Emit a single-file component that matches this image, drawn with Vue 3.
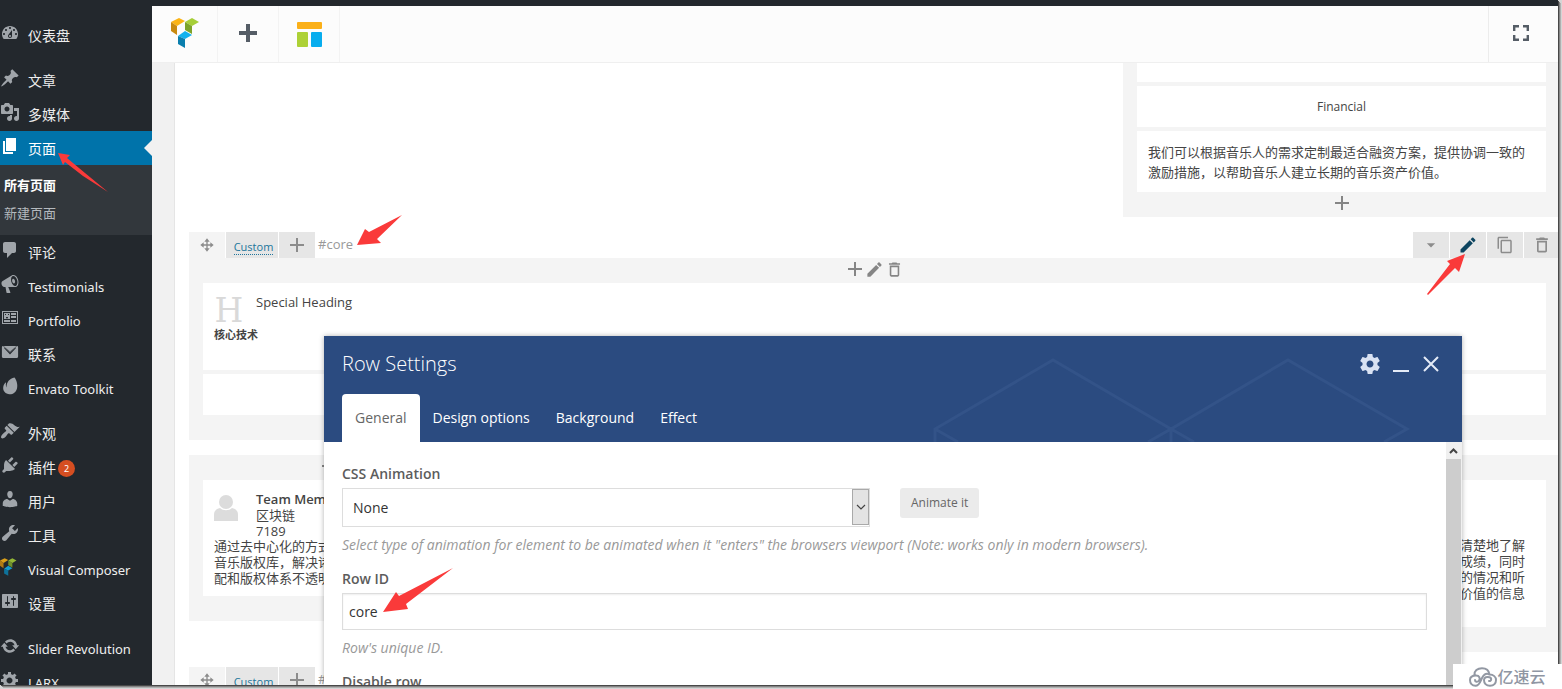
<script setup>
import { ref } from 'vue'

const icons = {
  dashboard: 'M3.76 16h12.48c1.1-1.37 1.76-3.11 1.76-5 0-4.42-3.58-8-8-8s-8 3.58-8 8c0 1.89.66 3.63 1.76 5zM10 4c.55 0 1 .45 1 1s-.45 1-1 1-1-.45-1-1 .45-1 1-1zM6 6c.55 0 1 .45 1 1s-.45 1-1 1-1-.45-1-1 .45-1 1-1zm8 0c.55 0 1 .45 1 1s-.45 1-1 1-1-.45-1-1 .45-1 1-1zm-5.37 5.55L12 7v6c0 1.1-.9 2-2 2s-2-.9-2-2c0-.57.24-1.08.63-1.45zM4 10c.55 0 1 .45 1 1s-.45 1-1 1-1-.45-1-1 .45-1 1-1zm12 0c.55 0 1 .45 1 1s-.45 1-1 1-1-.45-1-1 .45-1 1-1zm-5 3c0-.55-.45-1-1-1s-1 .45-1 1 .45 1 1 1 1-.45 1-1z',
  pin: 'M10.44 3.02l1.82-1.82 6.36 6.35-1.83 1.82c-1.05-.68-2.48-.57-3.41.36l-.75.75c-.92.93-1.04 2.35-.35 3.41l-1.83 1.82-2.41-2.41-2.8 2.79c-.42.42-3.38 2.71-3.8 2.29s1.86-3.39 2.28-3.81l2.79-2.79L4.1 9.36l1.83-1.82c1.05.69 2.48.57 3.4-.36l.75-.75c.93-.92 1.05-2.35.36-3.41z',
  media: 'M13 11V4c0-.55-.45-1-1-1h-1.67L9 1H5L3.67 3H2c-.55 0-1 .45-1 1v7c0 .55.45 1 1 1h10c.55 0 1-.45 1-1zM7 4.5c1.38 0 2.5 1.12 2.5 2.5S8.38 9.5 7 9.5 4.5 8.38 4.5 7 5.62 4.5 7 4.5zM14 6h5v10.5c0 1.38-1.12 2.5-2.5 2.5S14 17.88 14 16.5s1.12-2.5 2.5-2.5c.17 0 .34.02.5.05V9h-3V6zm-4 8.05V13h2v3.5c0 1.38-1.12 2.5-2.5 2.5S7 17.88 7 16.5 8.12 14 9.5 14c.17 0 .34.02.5.05z',
  page: 'M6 15V2h10v13H6zm-1 1h8v2H3V5h2v11z',
  comments: 'M5 2h9c1.1 0 2 .9 2 2v7c0 1.1-.9 2-2 2h-2l-5 5v-5H5c-1.1 0-2-.9-2-2V4c0-1.1.9-2 2-2z',
  megaphone: 'M18.15 5.94c.46 1.62.38 3.22-.02 4.48-.42 1.28-1.26 2.18-2.3 2.48-.16.06-.26.06-.4.06-.06.02-.12.02-.18.02-.06.02-.14.02-.22.02h-6.8l2.22 5.5c.02.14-.06.26-.14.34-.08.1-.24.16-.34.16H6.95c-.1 0-.26-.06-.34-.16-.08-.08-.16-.2-.14-.34l-1-5.5H4.25l-.02-.02c-.5.06-1.08-.18-1.54-.62s-.88-1.08-1.06-1.88c-.24-.8-.2-1.56-.02-2.2.18-.62.58-1.08 1.06-1.3l.02-.02 9-5.4c.1-.06.18-.1.24-.16.06-.04.14-.08.24-.12.16-.08.28-.12.5-.18 1.04-.3 2.24.1 3.22.98s1.84 2.24 2.26 3.86zm-2.58 5.98h-.02c.4-.1.74-.34 1.04-.7.58-.7.86-1.76.86-3.04 0-.64-.1-1.3-.28-1.98-.34-1.36-1.02-2.5-1.78-3.24s-1.68-1.1-2.46-.88c-.82.22-1.4.96-1.7 2-.32 1.04-.28 2.36.06 3.72.38 1.36 1 2.5 1.8 3.24.78.74 1.62 1.1 2.48.88zm-2.54-7.08c.22-.04.42-.02.62.04.38.16.76.48 1.02 1s.42 1.2.42 1.78c0 .3-.04.56-.12.8-.18.48-.44.84-.86.94-.34.1-.8-.06-1.14-.4s-.64-.86-.78-1.5c-.18-.62-.12-1.24.02-1.72s.48-.84.82-.94z',
  portfolio: 'M2 3h16v13H2zM3 4v11h14V4zM4 5h6v6H4zM5 6h1v1H5zM8 6h1v1H8zM6 9c0 2 2 2 2 0zM4 12h6v2H4zM11 5h5v2h-5zM11 8h5v2h-5zM11 12h5v2h-5z',
  email: 'M3.5 4h13l-6.5 5.6zM1.9 5.2C2 4.500 2.400 4 3 4L10 10.600 17 4c.6 0 1.100.5 1.100 1.200V14.500c0 .8-.6 1.500-1.400 1.500H3.400C2.500 16 1.900 15.300 1.900 14.500zM4 6l6 6.500L16 6l-1-.5-5 4.600-5-4.600z',
  envato: 'M14.500 1.500C16.500 4 18 8.500 17 12.500 16 16.500 12.800 18.500 9.500 18.300 5.500 18 2.800 15 3.200 11.500 3.400 9.500 4.200 8 5.300 6.800c.5-.4.800-.2.700.300-.3 1.600-.2 3 .5 4.300C6.500 6 9.500 2.500 14.500 1.500z',
  appearance: 'M14.48 11.06L7.41 3.99l1.5-1.5c.5-.56 2.3-.47 3.51.32 1.21.8 1.43 1.28 2.91 2.1 1.18.64 2.45 1.26 4.45.85zm-.71.71L6.7 4.7 4.93 6.47c-.39.39-.39 1.02 0 1.41l1.06 1.06c.39.39.39 1.03 0 1.42-.6.6-1.43 1.11-2.21 1.69-.35.26-.7.53-1.01.84C1.43 14.23.4 16.08 1.4 17.07c.99 1 2.84-.03 4.18-1.36.31-.31.58-.66.85-1.02.57-.78 1.08-1.61 1.69-2.21.39-.39 1.02-.39 1.41 0l1.06 1.06c.39.39 1.02.39 1.41 0z',
  plugins: 'M13.11 4.36L9.87 7.6 8 5.73l3.24-3.24c.35-.34 1.05-.2 1.56.32.52.51.66 1.21.31 1.55zm-8 1.77l.91-1.12 9.01 9.01-1.19.84c-.71.71-2.63 1.16-3.82 1.16H6.14L4.9 17.26c-.59.59-1.54.59-2.12 0-.59-.58-.59-1.53 0-2.12l1.24-1.24v-3.88c0-1.13.4-3.19 1.09-3.89zm7.26 3.97l3.24-3.24c.34-.35 1.04-.21 1.55.31.52.51.66 1.21.31 1.55l-3.24 3.25z',
  users: 'M10 9.25c-2.27 0-2.73-3.44-2.73-3.44C7 4.02 7.82 2 9.97 2c2.16 0 2.98 2.02 2.71 3.81 0 0-.41 3.44-2.68 3.44zm0 2.57L12.72 10c2.39 0 4.52 2.33 4.52 4.53v2.49s-3.65 1.13-7.24 1.13c-3.65 0-7.24-1.13-7.24-1.13v-2.49c0-2.25 1.94-4.48 4.47-4.48z',
  tools: 'M16.68 9.77c-1.34 1.34-3.3 1.67-4.95.99l-5.41 6.52c-.99.99-2.59.99-3.58 0s-.99-2.59 0-3.57l6.52-5.42c-.68-1.65-.35-3.61.99-4.95 1.28-1.28 3.12-1.62 4.72-1.06l-2.89 2.89 2.82 2.82 2.86-2.87c.53 1.58.18 3.39-1.08 4.65z',
  settings: 'M18 16V4c0-.55-.45-1-1-1H3c-.55 0-1 .45-1 1v12c0 .55.45 1 1 1h14c.55 0 1-.45 1-1zM8 11h1c.55 0 1 .45 1 1s-.45 1-1 1H8v1.5c0 .28-.22.5-.5.5s-.5-.22-.5-.5V13H6c-.55 0-1-.45-1-1s.45-1 1-1h1V5.5c0-.28.22-.5.5-.5s.5.22.5.5V11zm5-2h-1c-.55 0-1-.45-1-1s.45-1 1-1h1V5.5c0-.28.22-.5.5-.5s.5.22.5.5V7h1c.55 0 1 .45 1 1s-.45 1-1 1h-1v5.500c0 .28-.22.5-.5.5s-.5-.22-.5-.5V9z',
  update: 'M10.2 3.28c3.53 0 6.43 2.61 6.92 6h2.08l-3.5 4-3.5-4h2.32c-.45-1.97-2.21-3.45-4.32-3.45-1.45 0-2.73.71-3.54 1.78L4.95 5.66C6.23 4.2 8.11 3.28 10.2 3.28zm-.4 13.44c-3.52 0-6.43-2.61-6.92-6H.8l3.5-4c1.17 1.33 2.33 2.67 3.5 4H5.48c.45 1.97 2.21 3.45 4.32 3.45 1.45 0 2.73-.71 3.54-1.78l1.71 1.95c-1.28 1.46-3.15 2.38-5.25 2.38z',
  gear: 'M18 12h-2.18c-.17.7-.44 1.35-.81 1.93l1.54 1.54-2.1 2.1-1.54-1.54c-.58.36-1.23.63-1.91.79V19H8v-2.18c-.68-.16-1.33-.43-1.91-.79l-1.54 1.54-2.12-2.12 1.54-1.54c-.36-.58-.63-1.23-.79-1.91H1V9.03h2.17c.16-.7.44-1.35.8-1.94L2.43 5.55l2.1-2.1 1.54 1.54c.58-.37 1.24-.64 1.93-.81V2h3v2.18c.68.16 1.33.43 1.91.79l1.54-1.54 2.12 2.12-1.54 1.54c.36.59.64 1.24.8 1.94H18V12zm-8.5 1.5c1.66 0 3-1.34 3-3s-1.34-3-3-3-3 1.34-3 3 1.34 3 3 3z'
}

const pencil = 'M3 17.25V21h3.75L17.81 9.94l-3.75-3.75L3 17.25zM20.71 7.04c.39-.39.39-1.02 0-1.41l-2.34-2.34c-.39-.39-1.02-.39-1.41 0l-1.83 1.83 3.75 3.75 1.83-1.83z'
const trash = 'M6 19c0 1.100.9 2 2 2h8c1.100 0 2-.9 2-2V7H6v12zM8 9h8v10H8V9zm7.500-5l-1-1h-5l-1 1H5v2h14V4z'
const copy = 'M16 1H4c-1.100 0-2 .9-2 2v14h2V3h12V1zm3 4H8c-1.100 0-2 .9-2 2v14c0 1.100.9 2 2 2h11c1.100 0 2-.9 2-2V7c0-1.100-.9-2-2-2zm0 16H8V7h11v14z'
const plus = 'M11 5h2v6h6v2h-6v6h-2v-6H5v-2h6z'
const move = 'M12 2l4 5h-3v4h4V8l5 4-5 4v-3h-4v4h3l-4 5-4-5h3v-4H7v3l-5-4 5-4v3h4V7H8z'

const groups = [
  [{ icon: 'dashboard', label: '仪表盘' }],
  [
    { icon: 'pin', label: '文章' },
    { icon: 'media', label: '多媒体' },
    { icon: 'page', label: '页面', current: true, children: ['所有页面', '新建页面'] },
    { icon: 'comments', label: '评论' },
    { icon: 'megaphone', label: 'Testimonials', latin: true },
    { icon: 'portfolio', label: 'Portfolio', latin: true },
    { icon: 'email', label: '联系' },
    { icon: 'envato', label: 'Envato Toolkit', latin: true }
  ],
  [
    { icon: 'appearance', label: '外观' },
    { icon: 'plugins', label: '插件', badge: 2 },
    { icon: 'users', label: '用户' },
    { icon: 'tools', label: '工具' },
    { icon: 'vc', label: 'Visual Composer', latin: true },
    { icon: 'settings', label: '设置' }
  ],
  [
    { icon: 'update', label: 'Slider Revolution', latin: true },
    { icon: 'gear', label: 'LARX', latin: true }
  ]
]

const logoFaces = [
  { fill: '#fbb415', points: '0,4 8,0 14,3 6,8' },
  { fill: '#c98a10', points: '0,4 6,8 6,17 0,13' },
  { fill: '#a6cf38', points: '14,4 21,0 28,4 21,8' },
  { fill: '#7da32a', points: '14,4 21,8 21,16 14,12' },
  { fill: '#12b2ee', points: '7,18 14,13 21,17 14,21' },
  { fill: '#0a7fae', points: '7,18 14,21 14,30 7,26' }
]

const tabs = ['General', 'Design options', 'Background', 'Effect']
const activeTab = ref('General')
const animation = ref('None')
const rowId = ref('core')
</script>

<template>
  <div class="desk">
    <div class="screen">
      <div class="adminbar"></div>
      <nav class="sidebar" aria-label="Admin">
        <ul v-for="(group, g) in groups" :key="g" class="group">
          <li v-for="item in group" :key="item.label">
            <a href="#" class="item" :class="{ current: item.current, latin: item.latin }">
              <svg v-if="item.icon === 'vc'" class="item-icon" viewBox="0 -2 34 34">
                <polygon v-for="f in logoFaces" :key="f.points" :points="f.points" :fill="f.fill" opacity="0.85" />
              </svg>
              <svg v-else class="item-icon" viewBox="0 0 20 20"><path :d="icons[item.icon]" fill-rule="evenodd" /></svg>
              <span>{{ item.label }}</span>
              <span v-if="item.badge" class="badge">{{ item.badge }}</span>
            </a>
            <ul v-if="item.children" class="submenu">
              <li v-for="(child, c) in item.children" :key="child">
                <a href="#" :class="{ on: c === 0 }">{{ child }}</a>
              </li>
            </ul>
          </li>
        </ul>
      </nav>

      <main class="editor">
        <header class="toolbar">
          <a href="#" class="tool logo" aria-label="Visual Composer">
            <svg width="28" height="30" viewBox="0 0 28 30">
              <polygon v-for="f in logoFaces" :key="f.points" :points="f.points" :fill="f.fill" />
            </svg>
          </a>
          <button class="tool" aria-label="Add element">
            <svg width="18" height="18" viewBox="0 0 18 18"><path fill="#555d66" d="M7 0h4v7h7v4h-7v7H7v-7H0V7h7z" /></svg>
          </button>
          <button class="tool templates" aria-label="Templates">
            <svg width="25" height="25" viewBox="0 0 25 25">
              <rect width="25" height="7" rx="1" fill="#fbb018" />
              <rect y="10" width="11" height="15" rx="1" fill="#add136" />
              <rect x="14" y="10" width="11" height="15" rx="1" fill="#08adee" />
            </svg>
          </button>
          <button class="tool full" aria-label="Full screen">
            <svg width="16" height="16" viewBox="0 0 16 16"><path fill="none" stroke="#555d66" stroke-width="2.400" d="M1.200 6V1.200H6M10 1.200h4.800V6M14.800 10v4.800H10M6 14.800H1.200V10" /></svg>
          </button>
        </header>

        <div class="canvas">
          <div class="paper">
            <section class="cols three first-row">
              <div class="column last-third">
                <div class="card stub"></div>
                <div class="card line">Financial</div>
                <div class="card text">我们可以根据音乐人的需求定制最适合融资方案，提供协调一致的激励措施，以帮助音乐人建立长期的音乐资产价值。</div>
                <div class="column-foot">
                  <button class="glyph" aria-label="Append"><svg viewBox="0 0 24 24"><path :d="plus" /></svg></button>
                </div>
              </div>
            </section>

            <section>
              <div class="controls">
                <button class="ctl light" aria-label="Move"><svg viewBox="0 0 24 24" class="s16"><path :d="move" /></svg></button>
                <div class="ctl custom"><a href="#">Custom</a></div>
                <button class="ctl" aria-label="Add"><svg viewBox="0 0 24 24" class="s24"><path :d="plus" /></svg></button>
                <span class="row-id">#core</span>
                <button class="ctl push" aria-label="Toggle"><svg viewBox="0 0 24 24" class="s20"><path d="M7 10l5 5 5-5z" /></svg></button>
                <button class="ctl edit" aria-label="Edit"><svg viewBox="0 0 24 24" class="s20"><path :d="pencil" /></svg></button>
                <button class="ctl" aria-label="Clone"><svg viewBox="0 0 24 24" class="s18"><path :d="copy" /></svg></button>
                <button class="ctl" aria-label="Delete"><svg viewBox="0 0 24 24" class="s20"><path :d="trash" /></svg></button>
              </div>
              <div class="column">
                <div class="column-head">
                  <button class="glyph" aria-label="Add"><svg viewBox="0 0 24 24"><path :d="plus" /></svg></button>
                  <button class="glyph small" aria-label="Edit"><svg viewBox="0 0 24 24"><path :d="pencil" /></svg></button>
                  <button class="glyph small" aria-label="Delete"><svg viewBox="0 0 24 24"><path :d="trash" /></svg></button>
                </div>
                <div class="card heading">
                  <div class="heading-top"><span class="serif-h">H</span><span>Special Heading</span></div>
                  <strong>核心技术</strong>
                </div>
                <div class="card line"></div>
              </div>
            </section>

            <section class="cols four">
              <div class="column">
                <div class="column-head">
                  <button class="glyph" aria-label="Add"><svg viewBox="0 0 24 24"><path :d="plus" /></svg></button>
                  <button class="glyph small" aria-label="Edit"><svg viewBox="0 0 24 24"><path :d="pencil" /></svg></button>
                  <button class="glyph small" aria-label="Delete"><svg viewBox="0 0 24 24"><path :d="trash" /></svg></button>
                </div>
                <div class="card member">
                  <div class="member-top">
                    <svg class="avatar" viewBox="0 0 24 26"><ellipse cx="12" cy="7" rx="7" ry="7" /><path d="M0 26v-6c0-4 2-6 6-7 3 3 9 3 12 0 4 1 6 3 6 7v6z" /></svg>
                    <div><b>Team Member</b><br />区块链<br />7189</div>
                  </div>
                  <div>通过去中心化的方式<br />音乐版权库，解决诸<br />配和版权体系不透明</div>
                </div>
              </div>
              <div class="column tail">
                <div class="column-head"></div>
                <div class="card member right">清楚地了解<br />成绩，同时<br />的情况和听<br />价值的信息</div>
              </div>
            </section>

            <section>
              <div class="controls">
                <button class="ctl light" aria-label="Move"><svg viewBox="0 0 24 24" class="s16"><path :d="move" /></svg></button>
                <div class="ctl custom"><a href="#">Custom</a></div>
                <button class="ctl" aria-label="Add"><svg viewBox="0 0 24 24" class="s24"><path :d="plus" /></svg></button>
                <span class="row-id">#</span>
              </div>
            </section>
          </div>
        </div>
      </main>

      <section class="dialog" role="dialog" aria-label="Row Settings">
        <header class="dialog-head">
          <svg class="pattern" width="540" height="106" viewBox="0 0 540 106">
            <path d="M13 106V93L131 24 249 93 366 24 485 93 462 106M13 93L36 106M226 106L249 93 272 106M249 93V106" />
          </svg>
          <div class="title-bar">
            <h2>Row Settings</h2>
            <button aria-label="Settings"><svg width="24" height="24" viewBox="0 0 24 24"><path fill="#d9e2f3" d="M19.430 12.980c.04-.32.07-.64.07-.98s-.03-.66-.07-.98l2.110-1.650c.19-.15.240-.42.120-.64l-2-3.460c-.12-.22-.39-.3-.61-.22l-2.490 1c-.52-.4-1.080-.73-1.690-.98l-.38-2.650C14.460 2.180 14.250 2 14 2h-4c-.25 0-.46.180-.49.420l-.38 2.650c-.61.250-1.170.590-1.690.980l-2.490-1c-.23-.09-.49 0-.61.220l-2 3.460c-.13.220-.07.490.120.640l2.110 1.650c-.04.320-.07.650-.07.980s.03.660.07.980l-2.110 1.650c-.19.150-.24.420-.12.640l2 3.460c.120.220.390.300.610.220l2.490-1c.520.400 1.080.730 1.690.980l.380 2.650c.03.240.240.420.490.420h4c.250 0 .460-.18.490-.42l.380-2.650c.610-.25 1.170-.59 1.690-.98l2.490 1c.230.09.490 0 .610-.22l2-3.460c.120-.22.07-.49-.12-.64zM12 15.500c-1.930 0-3.500-1.570-3.500-3.500s1.570-3.500 3.500-3.500 3.500 1.570 3.500 3.500-1.570 3.500-3.500 3.500z" /></svg></button>
            <button aria-label="Minimize"><svg width="16" height="16" viewBox="0 0 16 16"><path fill="#e4ebf7" d="M0 14h16v2H0z" /></svg></button>
            <button aria-label="Close"><svg width="16" height="16" viewBox="0 0 16 16"><path stroke="#e4ebf7" stroke-width="2" d="M1 1l14 14M15 1L1 15" /></svg></button>
          </div>
          <div class="tabs" role="tablist">
            <button v-for="t in tabs" :key="t" role="tab" :class="{ active: t === activeTab }" @click="activeTab = t">{{ t }}</button>
          </div>
        </header>
        <div class="dialog-body">
          <form class="fields" @submit.prevent>
            <div class="field">
              <label for="anim">CSS Animation</label>
              <div class="inline">
                <div class="select">
                  <select id="anim" v-model="animation"><option>None</option></select>
                  <span class="arrow"><svg width="10" height="6" viewBox="0 0 10 6"><path d="M1 1l4 4 4-4" fill="none" stroke="#444" stroke-width="1.200" /></svg></span>
                </div>
                <button class="animate" type="button">Animate it</button>
              </div>
              <p>Select type of animation for element to be animated when it "enters" the browsers viewport (Note: works only in modern browsers).</p>
            </div>
            <div class="field">
              <label for="rowid">Row ID</label>
              <input id="rowid" v-model="rowId" type="text" />
              <p>Row's unique ID.</p>
            </div>
            <div class="field"><label>Disable row</label></div>
          </form>
          <div class="scroll"><div class="scroll-up"><svg width="9" height="6" viewBox="0 0 9 6"><path d="M1 5l3.500-3.500L8 5" fill="none" stroke="#444" stroke-width="2" /></svg></div></div>
        </div>
      </section>
    </div>

    <svg class="arrows" width="1562" height="689" viewBox="0 0 1562 689">
      <polygon points="58,153 70,155 67,158 85,173 108,192 83,176 65,162 63,165" />
      <polygon points="357,245 365,229 369,232 402,215 377,239 381,243" />
      <polygon points="1465,254 1447,261 1450,264 1427,294 1428,295 1455,268 1459,272" />
      <polygon points="383,612 396,592 399,596 453,568 406,604 408,609" />
    </svg>

    <div class="watermark">
      <svg width="28" height="20" viewBox="0 0 28 20">
        <path fill="none" stroke="#9298a3" stroke-width="2" stroke-linecap="round" d="M5.500 8C5 4 8.500 1.200 13 1.200S20 4 20.500 7.500M20.500 7.500C24.500 7.500 27 10 27 13S25 18.800 21 18.800 15 16 15 13 18 9.500 20.500 10.200 22.500 14.500 20 14M20.500 7.500C16.500 5.500 14 8.500 12.500 12S10 18.800 6.500 18.800 1 16 1 13 3.500 8.500 7 8.500s4.500 3 3 5-4 1.500-4-.5" />
      </svg>
      <span>亿速云</span>
    </div>
  </div>
</template>

<style>
html, body { margin: 0; }
</style>

<style scoped>
* { box-sizing: border-box; }
ul { list-style: none; margin: 0; padding: 0; }
button { font: inherit; border: 0; padding: 0; background: none; color: inherit; cursor: pointer; }
svg { display: block; }
.desk {
  position: relative;
  height: 100vh;
  padding: 0 4px 4px 0;
  overflow: hidden;
  background: #d5d5d5;
  font: 13px/20px "Open Sans", "Noto Sans CJK SC", sans-serif;
  color: #444;
}
.screen {
  position: relative;
  display: grid;
  grid-template: 6px minmax(0, 1fr) / 152px minmax(0, 1fr);
  height: 100%;
  background: #f1f1f1;
  box-shadow: 1px 1px 0 #484848, 2px 2px 0 #858585, 3px 3px 0 #b0b0b0;
}
.adminbar { grid-column: 1 / 3; background: #23282d; }

.sidebar { background: #23282d; padding-top: 12px; overflow: hidden; font-size: 14px; }
.group { margin-bottom: 11px; }
.item { position: relative; display: flex; height: 34px; padding-top: 2px; align-items: center; color: #eee; text-decoration: none; white-space: nowrap; font-family: "Noto Sans", "Noto Sans CJK SC", sans-serif; }
.latin { font-size: 13px; }
.item-icon { width: 20px; height: 20px; margin: 0 8px 6px 0; fill: #a0a5aa; }
.current { background: #0073aa; color: #fff; }
.current .item-icon { fill: #fff; }
.current::after { content: ""; position: absolute; right: 0; top: 9px; border: 8px solid transparent; border-left: 0; border-right-color: #f1f1f1; }
.badge { width: 17px; height: 17px; margin-left: 2px; border-radius: 9px; background: #d54e21; color: #fff; font-size: 9px; line-height: 17px; text-align: center; }
.submenu { background: #32373c; padding-top: 6px; height: 70px; }
.submenu a { display: block; padding-left: 4px; font-size: 13px; line-height: 28px; color: #b4b9be; text-decoration: none; }
.submenu .on { color: #fff; font-weight: 700; }

.editor { display: flex; flex-direction: column; overflow: hidden; }
.toolbar { display: flex; flex: none; height: 57px; background: #fcfcfc; border-bottom: 1px solid #efefef; }
.tool { display: flex; align-items: center; justify-content: center; width: 61px; padding-bottom: 2px; border-right: 1px solid #f3f3f3; }
.templates { padding-bottom: 0; }
.logo { width: 66px; }
.full { width: 70px; margin-left: auto; padding-right: 6px; border-right: 0; border-left: 1px solid #ececec; }
.canvas { flex: 1; min-height: 0; padding-left: 22px; overflow: hidden; }
.paper { display: flex; flex-direction: column; gap: 15px; margin-right: -2px; padding-left: 14px; background: #fff; border-left: 1px solid #e5e5e5; min-height: 100%; }
.cols { display: grid; gap: 30px; align-items: start; }
.three { grid-template-columns: repeat(3, 1fr); }
.four { grid-template-columns: repeat(4, 1fr); }
.last-third { grid-column: 3; }
.tail { grid-column: 4; }
.column { background: #f4f4f4; padding: 0 14px 25px; }
.last-third { padding-bottom: 0; }
.column-head, .column-foot { display: flex; align-items: center; justify-content: center; height: 25px; padding-bottom: 3px; }
.card { background: #fff; margin-bottom: 4px; padding: 11px; }
.card:last-child { margin-bottom: 0; }
.stub { height: 19px; padding: 0; }
.line { height: 41px; text-align: center; font-size: 12px; }
.text { padding-bottom: 10px; margin-bottom: 0; }
.glyph { display: flex; align-items: center; justify-content: center; width: 20px; fill: #858585; }
.glyph svg { flex: none; width: 24px; height: 24px; }
.glyph.small svg { width: 19px; height: 19px; }

.controls { display: flex; gap: 1px; height: 26px; }
.ctl { display: flex; align-items: center; justify-content: center; width: 36px; padding-bottom: 1px; background: #e6e6e6; fill: #8c8c8c; }
.light { background: #f4f4f4; }
.edit { fill: #0d4560; }
.push { margin-left: auto; }
.custom { width: 52px; padding: 4px 0 0 3px; font-size: 11px; line-height: 14px; }
.custom a { color: #21759b; text-decoration: none; border-bottom: 1px dotted #21759b; }
.row-id { padding-left: 2px; line-height: 24px; color: #999; }
.s16 { width: 16px; height: 16px; }
.s18 { width: 18px; height: 18px; }
.s20 { width: 20px; height: 20px; }
.s24 { width: 24px; height: 24px; }

.heading { height: 87px; }
.heading-top { display: flex; gap: 12px; height: 33px; line-height: 17px; }
.serif-h { width: 30px; font: 33px/34px "DejaVu Serif", serif; color: #d9d9d9; text-align: center; }
.heading strong { display: block; font-size: 11px; line-height: 16px; }
.member { height: 116px; line-height: 16px; white-space: nowrap; overflow: hidden; }
.member-top { display: flex; gap: 18px; height: 47px; }
.member b { font-weight: 600; }
.avatar { width: 24px; height: 26px; margin-top: 4px; fill: #dcdcdc; }
.member.right { height: 147px; padding: 57px 21px 0 0; text-align: right; }

.dialog { position: absolute; left: 324px; right: 96px; top: 336px; bottom: 0; display: flex; flex-direction: column; background: #fff; box-shadow: 0 0 5px rgba(0, 0, 0, 0.3); clip-path: inset(-8px -8px 0 -8px); }
.dialog-head { position: relative; display: flex; flex: none; flex-direction: column; justify-content: space-between; height: 106px; padding: 0 18px; background: #2b4b80; color: #fff; }
.pattern { position: absolute; right: 0; top: 0; fill: none; stroke: #335388; stroke-width: 3; }
.title-bar { position: relative; display: flex; align-items: center; gap: 14px; height: 56px; padding-right: 5px; }
.title-bar h2 { flex: 1; margin: 0; font-size: 20px; line-height: 28px; font-weight: 300; }
.title-bar button:nth-of-type(2) { margin-left: -3px; }
.tabs { position: relative; display: flex; height: 48px; font-size: 14px; }
.tabs button { padding: 0 13px; }
.tabs .active { background: #fff; color: #666; border-radius: 4px 4px 0 0; }
.dialog-body { display: flex; flex: 1; min-height: 0; }
.fields { flex: 1; min-width: 0; height: 100%; padding: 22px 19px 0 18px; overflow: hidden; font-size: 14px; }
.field { margin-bottom: 14px; }
.field label { display: block; margin-bottom: 4px; font-weight: 600; color: #5c5c5c; }
.field p { margin: 8px 0 0; font-style: italic; color: #999; }
.inline { display: flex; gap: 30px; align-items: flex-start; }
.select { position: relative; width: 528px; }
.select select, .field input { display: block; width: 100%; border: 1px solid #ddd; border-radius: 0; background: #fff; font: inherit; color: #333; appearance: none; }
.select select { height: 39px; padding: 0 10px; }
.field input { height: 37px; padding: 0 6px; box-shadow: inset 0 1px 2px rgba(0, 0, 0, 0.07); }
.arrow { position: absolute; right: 1px; top: 1px; bottom: 2px; width: 17px; display: flex; align-items: center; justify-content: center; background: #e3e3e3; border: 1px solid #a9a9a9; pointer-events: none; }
.animate { height: 30px; padding: 0 11px; border-radius: 3px; background: #ebebeb; font-size: 12px; color: #666; }
.scroll { width: 16px; background: #cdcdcd; border-right: 1px solid #f0f0f0; }
.scroll-up { display: flex; align-items: center; justify-content: center; height: 17px; background: #f0f0f0; }

.arrows { position: absolute; left: 0; top: 0; fill: #fa3a3a; pointer-events: none; }
.watermark { position: absolute; right: 0; bottom: 0; display: flex; align-items: center; justify-content: center; width: 109px; height: 25px; background: #fff; color: #8f96a3; font-size: 16px; font-weight: 500; }
</style>
